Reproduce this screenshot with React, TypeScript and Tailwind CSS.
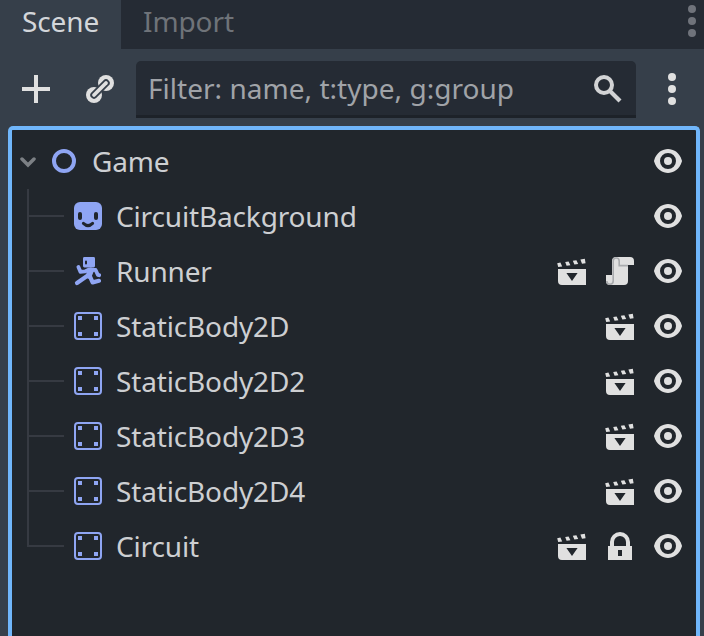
import type { ReactNode } from "react";

const LIGHT = "#e0e0e0";
const NODE_BLUE = "#8fa5f3";
const TREE_BG = "#21262c";

function Icon({ children, className = "" }: { children: ReactNode; className?: string }) {
  return (
    <svg viewBox="0 0 16 16" className={`block h-8 w-8 shrink-0 ${className}`}>
      {children}
    </svg>
  );
}

const Node2DIcon = () => (
  <Icon>
    <circle cx="8" cy="8" r="5" fill="none" stroke={NODE_BLUE} strokeWidth="2" />
  </Icon>
);

const SpriteIcon = () => (
  <Icon>
    <rect x="1" y="1" width="14" height="14" rx="3" fill={NODE_BLUE} />
    <rect x="3" y="6" width="2" height="4" rx="1" fill={TREE_BG} />
    <rect x="11" y="6" width="2" height="4" rx="1" fill={TREE_BG} />
    <path d="M5.700 11.700Q8 13.900 10.300 11.700" fill="none" stroke={TREE_BG} strokeWidth="1.500" strokeLinecap="round" />
  </Icon>
);

const RunnerIcon = () => (
  <Icon>
    <path
      fill={NODE_BLUE}
      fillRule="evenodd"
      d="M6.200 1h4.600q.7 0 .7.700v3.800q0 .7-.7.700H6.200q-.7 0-.7-.7V1.700q0-.7.700-.7zM7 2.800q-.5 0-.5.500v.9q0 .5.500.5t.5-.5v-.9q0-.5-.5-.5z"
    />
    <g fill="none" stroke={NODE_BLUE} strokeLinecap="round" strokeLinejoin="round">
      <path d="M3.200 6L4.200 8.400L6.500 8.200L8.500 7.300L11.800 7.500L12.900 9.900L13.600 10.100" strokeWidth="1.900" />
      <path d="M9.400 7.800L8.400 10.300" strokeWidth="3" />
      <path d="M2.500 14L7.900 10.300" strokeWidth="2.100" />
      <path d="M8.900 10.600L10.300 13.700L13.500 12.900" strokeWidth="2.100" />
    </g>
  </Icon>
);

const StaticBodyIcon = () => (
  <Icon>
    <rect x="1.500" y="1.500" width="13" height="13" rx="1.500" fill="none" stroke={NODE_BLUE} />
    <path fill={NODE_BLUE} d="M3 3h2v2H3zM11 3h2v2h-2zM3 11h2v2H3zM11 11h2v2h-2z" />
  </Icon>
);

const EyeIcon = () => (
  <Icon>
    <path
      fill={LIGHT}
      fillRule="evenodd"
      d="M8 2C5.440 2 2.210 3.600 1.050 7.700a1 1 0 0 0 0 .540C2.180 12.300 5.500 14 8 14s5.820-1.700 6.950-5.760a1 1 0 0 0 0-.540C13.800 3.600 10.560 2 8 2zm0 2a4 4 0 0 1 0 8 4 4 0 0 1 0-8zm0 2a2 2 0 0 0 0 4 2 2 0 0 0 0-4z"
    />
  </Icon>
);

const ClapperIcon = () => (
  <Icon>
    <path
      fill={LIGHT}
      fillRule="evenodd"
      d="M1 7h14v8H3a2 2 0 0 1-2-2zM5.200 9L8 13l2.800-4z"
    />
    <path
      fill={LIGHT}
      d="M.6 4.100l1.600-.3.900 1.900-2 .3zM4.600 3.500l1.700-.3.900 1.900-1.900.3zM8.400 2.900l1.800-.3.900 1.900-1.900.3zM12.200 2.300l2.200-.4.400 2.200-1.800.3z"
    />
  </Icon>
);

const ScriptIcon = () => (
  <Icon>
    <path fill={LIGHT} d="M6 1a2 2 0 0 0-2 2v7H1v3a2 2 0 0 0 2 2h7a2 2 0 0 0 2-2V5h3V3a2 2 0 0 0-2-2z" />
    <path
      d="M1.400 13a1.600 1.600 0 0 0 3.200 0V3a1.500 1.500 0 0 1 3 0v2.300h4.400"
      fill="none"
      stroke="#a9abae"
      strokeWidth=".8"
    />
  </Icon>
);

const LockIcon = () => (
  <Icon>
    <path
      fill={LIGHT}
      fillRule="evenodd"
      d="M8 1a5 5 0 0 0-5 5v2H2v7h12V8h-1V6a5 5 0 0 0-5-5zm0 2a3 3 0 0 1 3 3v2H5V6a3 3 0 0 1 3-3zM7 10h2v3H7z"
    />
  </Icon>
);

const PlusIcon = ({ className }: { className?: string }) => (
  <Icon className={className}>
    <path fill={LIGHT} d="M7 1v6H1v2h6v6h2V9h6V7H9V1z" />
  </Icon>
);

const LinkIcon = ({ className }: { className?: string }) => (
  <Icon className={className}>
    <circle cx="11" cy="5" r="4" fill={LIGHT} />
    <circle cx="5" cy="11" r="4" fill={LIGHT} />
    <path d="M5 11L11 5" stroke="#363f4a" strokeWidth="3.700" strokeLinecap="round" />
    <path d="M5 11L11 5" stroke={LIGHT} strokeWidth="1.900" strokeLinecap="round" />
  </Icon>
);

const SearchIcon = () => (
  <Icon>
    <circle cx="6" cy="6" r="4" fill="none" stroke="#d2d3d5" strokeWidth="2" />
    <path d="M8.600 8.600L14 14" stroke="#d2d3d5" strokeWidth="2.100" />
  </Icon>
);

function Dots({ className }: { className: string }) {
  return (
    <div className="flex flex-col gap-1">
      {[0, 1, 2].map((n) => (
        <span key={n} className={`h-2 w-2 rounded-full ${className}`} />
      ))}
    </div>
  );
}

type TreeNode = { name: string; icon: ReactNode; actions: ReactNode[] };

const children: TreeNode[] = [
  { name: "CircuitBackground", icon: <SpriteIcon />, actions: [] },
  { name: "Runner", icon: <RunnerIcon />, actions: [<ClapperIcon key="c" />, <ScriptIcon key="s" />] },
  { name: "StaticBody2D", icon: <StaticBodyIcon />, actions: [<ClapperIcon key="c" />] },
  { name: "StaticBody2D2", icon: <StaticBodyIcon />, actions: [<ClapperIcon key="c" />] },
  { name: "StaticBody2D3", icon: <StaticBodyIcon />, actions: [<ClapperIcon key="c" />] },
  { name: "StaticBody2D4", icon: <StaticBodyIcon />, actions: [<ClapperIcon key="c" />] },
  { name: "Circuit", icon: <StaticBodyIcon />, actions: [<ClapperIcon key="c" />, <LockIcon key="l" />] },
];

function RowContent({ name, icon, actions }: TreeNode) {
  return (
    <>
      <div className="pt-[11px]">{icon}</div>
      <span className="ml-3 flex-1 leading-[54px] tracking-[-0.15px] text-[#cdcfd2]">{name}</span>
      <div className="flex gap-4 pt-[11px] pr-3">
        {actions}
        <EyeIcon />
      </div>
    </>
  );
}

export default function App() {
  return (
    <div className="flex h-[636px] w-[704px] flex-col overflow-hidden bg-[#363f4a] font-['Noto_Sans',sans-serif] text-[28px] whitespace-nowrap">
      <header className="flex h-[49px] shrink-0 bg-[#252b34] leading-[42px]">
        <div className="w-[121px] bg-[#363f4a] pl-[22px] tracking-[-0.1px] text-[#d3d6da]">Scene</div>
        <div className="flex-1 pl-[22px] tracking-[-0.1px] text-[#6f7379]">Import</div>
        <div className="pt-[5px] pr-2">
          <Dots className="bg-[#6f737b]" />
        </div>
      </header>

      <div className="flex h-[77px] shrink-0 pt-3">
        <PlusIcon className="mt-3 ml-5" />
        <LinkIcon className="mt-3 ml-8" />
        <div className="ml-5 flex h-[57px] w-[500px] rounded-t-[5px] border-b-3 border-[#1d2229] bg-[#252b34] pr-3 pl-3">
          <span className="flex-1 leading-[54px] tracking-[0.03px] text-[#a0a3a8]">Filter: name, t:type, g:group</span>
          <div className="pt-3">
            <SearchIcon />
          </div>
        </div>
        <div className="ml-8 pt-3">
          <Dots className="bg-[#e0e0e0]" />
        </div>
      </div>

      <main className="mx-2 mr-1 flex-1 rounded-t-[5px] border-4 border-b-0 border-[#70b6fb] bg-[#21262c] pt-1">
        <div className="flex h-[55px] pl-2">
          <svg viewBox="0 0 16 16" className="mt-[20px] h-4 w-4 shrink-0">
            <path d="M2 5L8 11L14 5" fill="none" stroke="#7c8085" strokeWidth="3.500" strokeLinecap="round" />
          </svg>
          <div className="flex flex-1 pl-3">
            <RowContent name="Game" icon={<Node2DIcon />} actions={[]} />
          </div>
        </div>
        {children.map((node, i) => (
          <div key={node.name} className="flex h-[55px] pl-[15px]">
            <div className="mr-2 w-[37px] shrink-0">
              <div className="h-7 border-b-2 border-l-2 border-[#363a42]" />
              {i < children.length - 1 && <div className="h-[27px] border-l-2 border-[#363a42]" />}
            </div>
            <RowContent {...node} />
          </div>
        ))}
      </main>
    </div>
  );
}
